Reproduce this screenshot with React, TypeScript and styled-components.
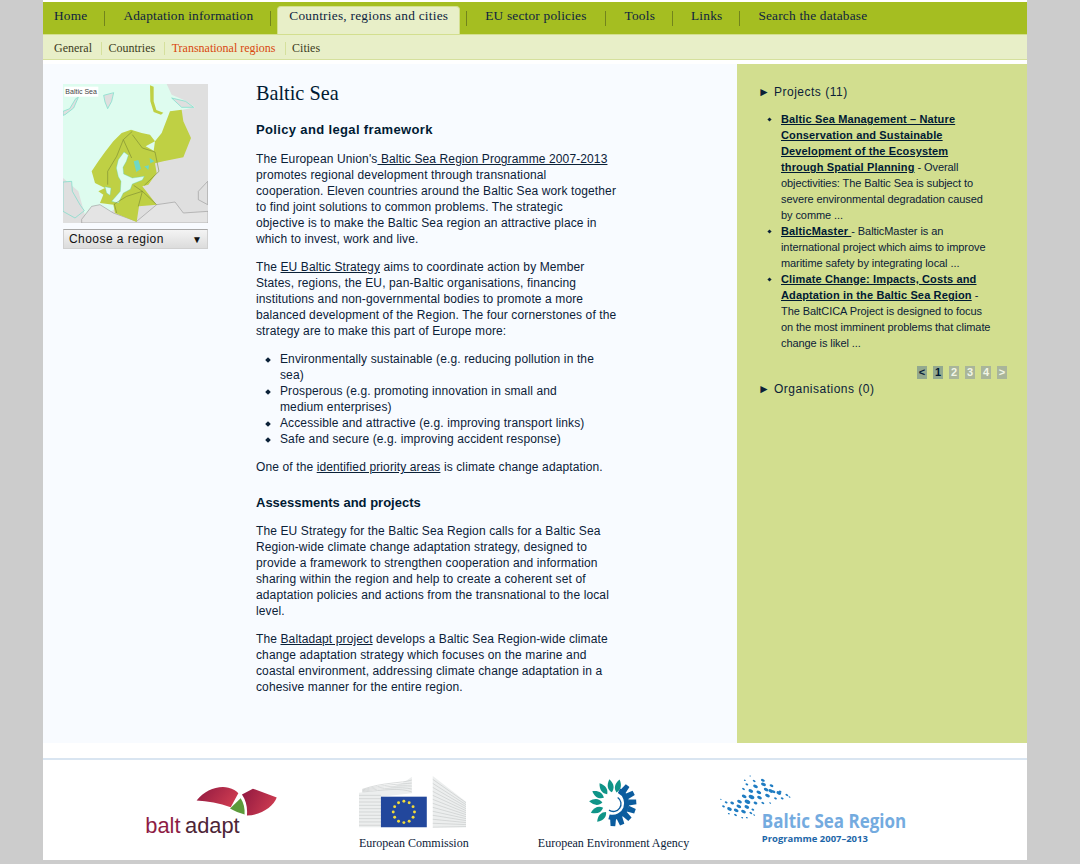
import React from 'react';
import styled, { createGlobalStyle } from 'styled-components';

const GlobalStyle = createGlobalStyle`
    html, body {
        margin: 0;
        padding: 0;
        background: #cccccc;
    }
    * {
        box-sizing: border-box;
    }
`

const Page = styled.div`
    width: 984px;
    margin-left: 43px;
    height: 860px;
    background: #fff;
    padding-top: 2px;
    font-family: "Liberation Sans", Arial, sans-serif;
    color: #0b2138;
    overflow: hidden;
`

const MainNav = styled.ul`
    list-style: none;
    margin: 0;
    padding: 0;
    height: 32px;
    background: #a5be21;
    display: flex;
    align-items: flex-start;
    font-family: "Liberation Serif", "Times New Roman", serif;
    font-size: 13.33px;
    line-height: 16px;
`

const MainItem = styled.li<{ $left?: number; $right?: number }>`
    color: #0d2340;
    letter-spacing: 0.2px;
    padding: 6px ${p => p.$right ?? 17}px 0 ${p => p.$left ?? 18}px;
    white-space: nowrap;
`

const ActiveItem = styled.li`
    color: #0d2340;
    letter-spacing: 0.25px;
    height: 28px;
    margin: 4px 6px 0;
    padding: 1px 11px 0;
    background: #e8efc8;
    border: 1px solid #d3df8f;
    border-bottom: none;
    border-radius: 4px 4px 0 0;
    white-space: nowrap;
`

const Sep = styled.li`
    width: 1px;
    height: 15px;
    margin-top: 9px;
    background: #72841c;
`

const SubNav = styled.ul`
    list-style: none;
    margin: 0;
    padding: 7px 0 0 11px;
    height: 26px;
    background: #e8efc8;
    border-top: 1px solid #d3df8f;
    border-bottom: 1px solid #d5e09c;
    display: flex;
    font-family: "Liberation Serif", "Times New Roman", serif;
    font-size: 12px;
    line-height: 12px;
`

const SubItem = styled.li<{ $active?: boolean; $last?: boolean }>`
    color: ${p => p.$active ? '#d9480f' : '#3c3c1c'};
    height: 13px;
    padding-right: 9px;
    margin-right: 6.5px;
    border-right: ${p => p.$last ? 'none' : '1px solid #d5e09c'};
`

const Body = styled.div`
    display: grid;
    grid-template-columns: 694px 290px;
    height: 683px;
`

const Main = styled.div`
    display: grid;
    grid-template-columns: 193px 400px;
    align-content: start;
    margin-top: 4px;
    padding: 20px 0 0 20px;
    background: #f8fbff;
`

const RegionCol = styled.div`
    display: flex;
    flex-direction: column;
    gap: 6px;
    width: 145px;
`

const MapFrame = styled.svg`
    display: block;
    width: 145px;
    height: 139px;
`

const RegionSelect = styled.div`
    height: 20px;
    display: flex;
    align-items: center;
    justify-content: space-between;
    padding: 0 5px;
    background: linear-gradient(#f4f4f4, #dcdcdc);
    border: 1px solid #d0d0d0;
    border-top-color: #a8a8a8;
    font-size: 12px;
    letter-spacing: 0.45px;
    color: #111;
`

const Caret = styled.span`
    font-size: 10px;
    letter-spacing: 0;
`

const Article = styled.div`
    font-size: 12px;
    line-height: 16px;
    letter-spacing: 0.12px;
    color: #0b2138;
`

const Title = styled.h1`
    font-family: "Liberation Serif", "Times New Roman", serif;
    font-size: 20.25px;
    font-weight: 400;
    letter-spacing: 0;
    line-height: 18px;
    margin: 0 0 20px;
    color: #001a33;
`

const Heading = styled.h2<{ $spaced?: boolean }>`
    font-size: 13px;
    line-height: 16px;
    font-weight: 700;
    margin: ${p => p.$spaced ? '20px 0 12px' : '0 0 13px'};
    color: #001a33;
    letter-spacing: ${p => p.$spaced ? '0' : '0.35px'};
`

const Para = styled.p`
    margin: 0 0 12px;
`

const Link = styled.a`
    color: #0b2138;
    text-decoration: underline;
`

const Bullets = styled.ul`
    list-style: none;
    margin: 0 0 12px;
    padding: 0 0 0 24px;
`

const Bullet = styled.li`
    position: relative;

    &::before {
        content: '';
        position: absolute;
        left: -14px;
        top: 7px;
        width: 4px;
        height: 4px;
        transform: rotate(45deg);
        background: #0b2138;
    }
`

const Sidebar = styled.aside`
    margin-top: 4px;
    background: #d2de8f;
    padding: 20px 20px 0 22px;
    color: #0b2138;
`

const GroupTitle = styled.div`
    font-size: 12px;
    line-height: 16px;
    letter-spacing: 0.5px;
    display: flex;
`

const Arrow = styled.span`
    width: 16px;
    font-size: 12px;
    letter-spacing: 0;
    margin-left: -1px;
`

const ProjectList = styled.ul`
    list-style: none;
    margin: 11px 0 0;
    padding: 0 10px 0 22px;
    font-size: 11px;
    line-height: 16px;
    letter-spacing: -0.08px;
`

const ProjectItem = styled.li`
    position: relative;

    &::before {
        content: '';
        position: absolute;
        left: -13px;
        top: 7px;
        width: 3px;
        height: 3px;
        transform: rotate(45deg);
        background: #0b2138;
    }
`

const ProjectLink = styled.a`
    font-weight: 700;
    letter-spacing: 0.14px;
    color: #001a33;
    text-decoration: underline;
`

const Pager = styled.div`
    display: flex;
    justify-content: flex-end;
    gap: 6px;
    margin: 15px 0 2px;
    height: 13px;
`

const PageBox = styled.span<{ $current?: boolean; $nav?: boolean }>`
    width: 10px;
    height: 13px;
    font-size: 11px;
    line-height: 13px;
    font-weight: 700;
    text-align: center;
    background: ${p => p.$current || p.$nav ? '#93a98f' : '#a9b59a'};
    color: ${p => p.$current ? '#001a33' : p.$nav ? '#0b2138' : '#f2f5e6'};
`

const Footer = styled.footer`
    margin-top: 15px;
    border-top: 2px solid #d9e5f1;
    height: 102px;
    display: flex;
    align-items: flex-start;
    padding-left: 102px;
    font-family: "Liberation Serif", "Times New Roman", serif;
    font-size: 12px;
    color: #0b2138;
`

const LogoSlot = styled.div<{ $width: number; $top: number }>`
    width: ${p => p.$width}px;
    padding-top: ${p => p.$top}px;
    display: flex;
    flex-direction: column;
    align-items: flex-start;
`

const AgencySlot = styled(LogoSlot)`
    align-items: center;
    padding-right: 31px;
`

const Caption = styled.span`
    line-height: 14px;
    margin-top: 8px;
    white-space: nowrap;
`

const Ink = styled.svg`
    display: block;
    flex: none;
    overflow: visible;
`

const borders = [
    'M232 160L205 185L185 235L158 280L158 320',
    'M205 185L230 240',
    'M232 170L262 210L300 222L312 280L268 322',
    'M178 378L215 355L262 340L305 380',
    'M236 322L262 340L250 385',
    'M178 378L185 405',
]

const RegionMap = () => (
    <MapFrame viewBox="24 18 435 417">
        <rect x="24" y="18" width="435" height="417" fill="#dfdfdf" />
        <path d="M24 18H335L350 50L392 68L420 88L380 96L340 140L300 210L290 300L170 400L90 412L70 340L24 300Z" fill="#defcef" />
        <path d="M24 100L44 92L62 62L70 58L56 90L30 110L24 112ZM146 52L176 44L170 70L158 92L150 72ZM350 60L392 70L416 88L380 88Z" fill="#dfdfdf" stroke="#74dcc8" strokeWidth="2" />
        <path d="M24 312L50 310L52 340L76 382L88 398L60 420L24 400Z" fill="#dfdfdf" stroke="#74dcc8" strokeWidth="2" />
        <path d="M80 424L110 385L135 380L175 405L245 430L305 380L360 372L385 405L459 400V435H80Z" fill="#e4e4e4" stroke="#888" strokeWidth="1.5" />
        <path d="M430 340L458 310V380L430 365Z" fill="#dfdfdf" stroke="#888" strokeWidth="1.5" />
        <path d="M285 22L296 26L296 70L304 96L325 104L318 110L296 102L286 70Z" fill="#bfd044" />
        <path d="M110 280L130 250L150 222L175 190L200 165L228 155L260 165L285 170L300 190L272 205L296 218L300 190L320 165L345 100L380 95L385 130L408 180L385 238L325 250L300 256L305 285L280 320L262 325L305 380L252 385L245 432L180 405L175 380L135 375L145 350L130 340L150 330L120 315Z" fill="#bfd044" />
        <path d="M207 222L220 232L214 250L204 268L206 288L232 300L268 295L262 306L232 318L226 334L205 345L190 375L170 370L196 340L198 310L190 296L184 270L190 245Z" fill="#defcef" stroke="#55d0bd" strokeWidth="1" />
        <path d="M150 326L168 330L165 352L155 345Z" fill="#defcef" stroke="#55d0bd" strokeWidth="1" />
        <path d="M236 250L250 246L258 272L244 282ZM268 265L282 262L280 276ZM284 240L298 250L286 256Z" fill="#6ed8c4" />
        {borders.map(d => <path key={d} d={d} fill="none" stroke="#6f7f30" strokeWidth="1.6" />)}
        <rect x="28" y="26" width="102" height="30" fill="#fff" />
        <text x="31" y="48" fontFamily="Liberation Sans, sans-serif" fontSize="21" fill="#444">Baltic Sea</text>
    </MapFrame>
)

const BaltAdaptLogo = () => (
    <Ink width="133" height="51" viewBox="45 108 400 154">
        <defs>
            <linearGradient id="wing" x1="0" x2="1" y1="0" y2="0.4">
                <stop offset="0" stopColor="#8f1840" />
                <stop offset="1" stopColor="#cb3a50" />
            </linearGradient>
        </defs>
        <path d="M200 152C224 122 262 106 296 113C310 116 320 122 326 130L303 172C270 160 232 154 200 152Z" fill="url(#wing)" />
        <path d="M337 134L370 116L442 143C432 170 396 196 352 197C354 174 350 152 337 134Z" fill="url(#wing)" />
        <path d="M301 176L333 145C342 158 346 176 345 194C330 190 314 184 301 176Z" fill="#5c9a3a" />
        <text x="45" y="250" fontFamily="Liberation Sans, sans-serif" fontSize="66" fill="#8e1c45">balt</text>
        <text x="165" y="250" fontFamily="Liberation Sans, sans-serif" fontSize="66" fill="#4d2536">adapt</text>
    </Ink>
)

const leftLines = [136, 146, 156, 166, 176, 186, 196, 206, 216, 226]
const rightLines = [0, 1, 2, 3, 4, 5, 6, 7, 8, 9, 10, 11, 12]
const stars = Array.from({ length: 12 }, (_, i) => (i * Math.PI) / 6)

const CommissionLogo = () => (
    <Ink width="107" height="52" viewBox="686 78 322 156">
        <path d="M686 128C750 122 810 110 845 80V130L752 140V232H686Z" fill="#eceeee" />
        {leftLines.map(y => <path key={y} d={`M686 ${y}H752`} stroke="#c9cccc" strokeWidth="2" />)}
        {rightLines.slice(0, 5).map(i => (
            <path key={i} d={`M696 ${126 - i * 2}C760 ${120 - i * 6} 812 ${112 - i * 3} 845 ${126 - i * 9}`} fill="none" stroke="#c9cccc" strokeWidth="2" />
        ))}
        <path d="M908 78L1008 155V232H908Z" fill="#eceeee" />
        {rightLines.map(i => (
            <path key={i} d={`M908 ${88 + i * 12}L1008 ${158 + i * 6}`} stroke="#c9cccc" strokeWidth="2" />
        ))}
        <rect x="752" y="140" width="138" height="92" fill="#22479c" />
        {stars.map(a => (
            <circle key={a} cx={821 + Math.cos(a) * 32} cy={186 + Math.sin(a) * 32} r="4.4" fill="#f3dc3a" />
        ))}
    </Ink>
)

const leafAngles = [14, -10, -35, -60, -85, -112, -138]
const toothAngles = [38, 62, 86, 110, 134, 158, 182]

const AgencyLogo = () => (
    <Ink width="49" height="48" viewBox="178 90 147 143">
        {leafAngles.map(a => (
            <path key={a} d="M252 126C241 116 240 102 252 86C264 102 263 116 252 126Z" fill="#0f9488" transform={`rotate(${a} 252 160)`} />
        ))}
        {toothAngles.map(a => (
            <path key={a} d="M243 115L245 92H259L261 115Z" fill="#0b5c9e" transform={`rotate(${a} 252 160)`} />
        ))}
        <path d="M268 122A42 42 0 0 1 238 200" fill="none" stroke="#0b5c9e" strokeWidth="15" />
        <path d="M264 142A22 22 0 0 1 238 180" fill="none" stroke="#0b5c9e" strokeWidth="4" />
    </Ink>
)

const dots = [
    [660, 79, 1.5], [644, 92, 2], [672, 94, 3], [698, 92, 4], [724, 108, 4], [750, 126, 3], [778, 142, 2],
    [650, 104, 3], [676, 110, 5], [700, 104, 5], [722, 124, 5], [746, 130, 5], [770, 136, 3],
    [640, 118, 3], [662, 124, 5], [686, 128, 5], [708, 120, 5], [730, 126, 4], [756, 146, 3],
    [642, 140, 5], [664, 142, 6], [688, 144, 5], [712, 138, 5], [736, 146, 3],
    [628, 156, 5], [652, 156, 6], [676, 160, 4], [698, 160, 3], [720, 160, 2],
    [572, 149, 1.5], [588, 158, 3], [606, 160, 4], [626, 170, 5], [650, 172, 5], [668, 180, 3],
    [580, 170, 3], [598, 178, 5], [618, 182, 5], [640, 186, 5], [662, 190, 3],
    [596, 192, 2], [616, 196, 3], [636, 204, 2], [650, 204, 2], [672, 196, 2],
]

const BalticRegionLogo = () => (
    <Ink width="187" height="70" viewBox="570 76 560 210">
        {dots.map(([x, y, r]) => (
            <ellipse key={`${x}-${y}`} cx={x} cy={y} rx={r * 1.5} ry={r * 0.95} fill="#1f7cc2" transform={`rotate(25 ${x} ${y})`} />
        ))}
        <text x="695" y="236" textLength="433" lengthAdjust="spacingAndGlyphs" fontFamily="Open Sans, sans-serif" fontWeight="700" fontSize="58" fill="#74abdf">Baltic Sea Region</text>
        <text x="695" y="278" textLength="318" lengthAdjust="spacingAndGlyphs" fontFamily="Open Sans, sans-serif" fontWeight="700" fontSize="28" fill="#1d66a8">Programme 2007–2013</text>
    </Ink>
)

const App = () => {
    return (
        <Page>
            <GlobalStyle />
            <MainNav>
                <MainItem $left={11}>Home</MainItem>
                <Sep />
                <MainItem>Adaptation information</MainItem>
                <Sep />
                <ActiveItem>Countries, regions and cities</ActiveItem>
                <Sep />
                <MainItem $right={18}>EU sector policies</MainItem>
                <Sep />
                <MainItem $left={19}>Tools</MainItem>
                <Sep />
                <MainItem>Links</MainItem>
                <Sep />
                <MainItem>Search the database</MainItem>
            </MainNav>
            <SubNav>
                <SubItem>General</SubItem>
                <SubItem>Countries</SubItem>
                <SubItem $active>Transnational regions</SubItem>
                <SubItem $last>Cities</SubItem>
            </SubNav>
            <Body>
                <Main>
                    <RegionCol>
                        <RegionMap />
                        <RegionSelect>Choose a region<Caret>▼</Caret></RegionSelect>
                    </RegionCol>
                    <Article>
                        <Title>Baltic Sea</Title>
                        <Heading>Policy and legal framework</Heading>
                        <Para>The European Union's<Link> Baltic Sea Region Programme 2007-2013</Link><br />promotes regional development through transnational<br />cooperation. Eleven countries around the Baltic Sea work together<br />to find joint solutions to common problems. The strategic<br />objective is to make the Baltic Sea region an attractive place in<br />which to invest, work and live.</Para>
                        <Para>The <Link>EU Baltic Strategy</Link> aims to coordinate action by Member<br />States, regions, the EU, pan-Baltic organisations, financing<br />institutions and non-governmental bodies to promote a more<br />balanced development of the Region. The four cornerstones of the<br />strategy are to make this part of Europe more:</Para>
                        <Bullets>
                            <Bullet>Environmentally sustainable (e.g. reducing pollution in the<br />sea)</Bullet>
                            <Bullet>Prosperous (e.g. promoting innovation in small and<br />medium enterprises)</Bullet>
                            <Bullet>Accessible and attractive (e.g. improving transport links)</Bullet>
                            <Bullet>Safe and secure (e.g. improving accident response)</Bullet>
                        </Bullets>
                        <Para>One of the <Link>identified priority areas</Link> is climate change adaptation.</Para>
                        <Heading $spaced>Assessments and projects</Heading>
                        <Para>The EU Strategy for the Baltic Sea Region calls for a Baltic Sea<br />Region-wide climate change adaptation strategy, designed to<br />provide a framework to strengthen cooperation and information<br />sharing within the region and help to create a coherent set of<br />adaptation policies and actions from the transnational to the local<br />level.</Para>
                        <Para>The <Link>Baltadapt project</Link> develops a Baltic Sea Region-wide climate<br />change adaptation strategy which focuses on the marine and<br />coastal environment, addressing climate change adaptation in a<br />cohesive manner for the entire region.</Para>
                    </Article>
                </Main>
                <Sidebar>
                    <GroupTitle><Arrow>►</Arrow>Projects (11)</GroupTitle>
                    <ProjectList>
                        <ProjectItem><ProjectLink>Baltic Sea Management – Nature<br />Conservation and Sustainable<br />Development of the Ecosystem<br />through Spatial Planning</ProjectLink> - Overall<br />objectivities: The Baltic Sea is subject to<br />severe environmental degradation caused<br />by comme ...</ProjectItem>
                        <ProjectItem><ProjectLink>BalticMaster </ProjectLink> - BalticMaster is an<br />international project which aims to improve<br />maritime safety by integrating local ...</ProjectItem>
                        <ProjectItem><ProjectLink>Climate Change: Impacts, Costs and<br />Adaptation in the Baltic Sea Region</ProjectLink> -<br />The BaltCICA Project is designed to focus<br />on the most imminent problems that climate<br />change is likel ...</ProjectItem>
                    </ProjectList>
                    <Pager>
                        <PageBox $nav>&lt;</PageBox>
                        <PageBox $current>1</PageBox>
                        <PageBox>2</PageBox>
                        <PageBox>3</PageBox>
                        <PageBox>4</PageBox>
                        <PageBox>&gt;</PageBox>
                    </Pager>
                    <GroupTitle><Arrow>►</Arrow>Organisations (0)</GroupTitle>
                </Sidebar>
            </Body>
            <Footer>
                <LogoSlot $width={214} $top={26}>
                    <BaltAdaptLogo />
                </LogoSlot>
                <LogoSlot $width={179} $top={16}>
                    <CommissionLogo />
                    <Caption>European Commission</Caption>
                </LogoSlot>
                <AgencySlot $width={182} $top={20}>
                    <AgencyLogo />
                    <Caption>European Environment Agency</Caption>
                </AgencySlot>
                <LogoSlot $width={190} $top={15}>
                    <BalticRegionLogo />
                </LogoSlot>
            </Footer>
        </Page>
    );
};

export default App;
